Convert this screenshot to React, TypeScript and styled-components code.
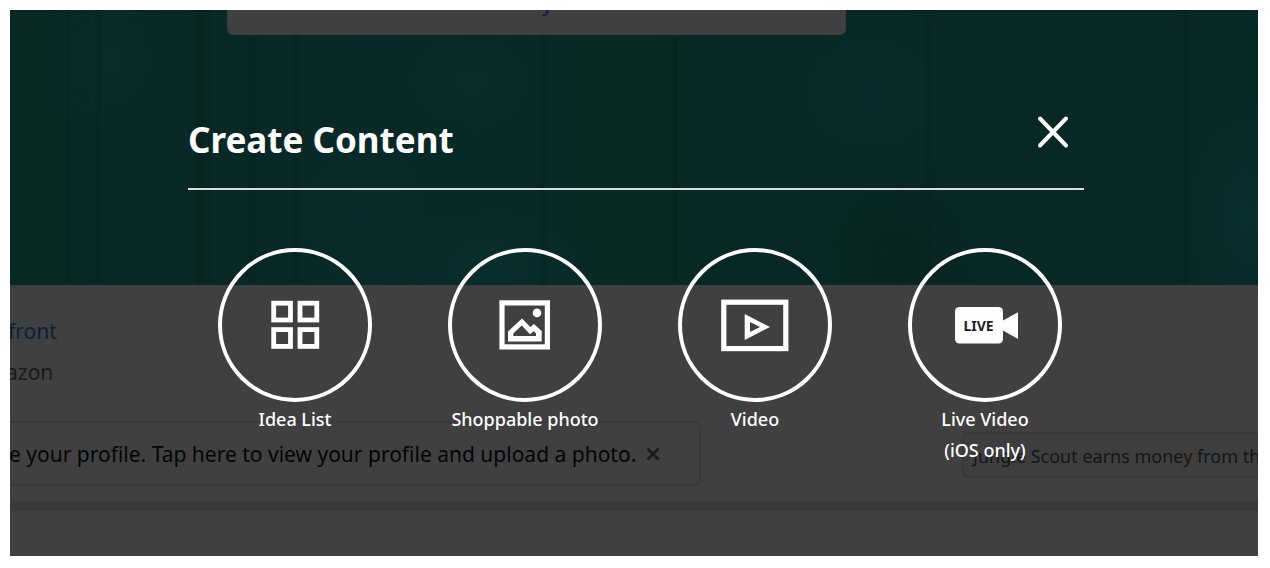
import React from "react";
import styled, { createGlobalStyle } from "styled-components";

const GlobalStyle = createGlobalStyle`
  *, *::before, *::after { box-sizing: border-box; }
  body {
    margin: 0;
    background: #fff;
    font-family: "Noto Sans", "Open Sans", sans-serif;
  }
`;

const Stage = styled.main`
  position: relative;
  margin: 10px 12px 12px 10px;
  overflow: hidden;
  background: #404040;
`;

const Banner = styled.section`
  height: 275px;
  background:
    linear-gradient(90deg, transparent 4.4%, #06201d66 4.6%, transparent 5%),
    linear-gradient(90deg, transparent 6.7%, #06201d77 7.1%, transparent 7.5%),
    linear-gradient(90deg, transparent 14.6%, #051f1b99 15.2%, transparent 16.4%),
    linear-gradient(90deg, transparent 18.8%, #06201d77 19.3%, transparent 20%),
    linear-gradient(90deg, transparent 22.4%, #06201d66 22.9%, transparent 23.4%),
    linear-gradient(90deg, transparent 42.2%, #06201d66 42.7%, transparent 43.2%),
    linear-gradient(90deg, transparent 52.8%, #06201d88 53.3%, transparent 53.8%),
    linear-gradient(90deg, transparent 73.2%, #06201d55 73.6%, transparent 74.2%),
    linear-gradient(90deg, transparent 93.7%, #06201d88 94.2%, transparent 94.6%),
    radial-gradient(ellipse 60px 120px at 99% 75%, #092f2e, transparent),
    radial-gradient(ellipse 80px 90px at 71% 92%, #06211dbb, transparent),
    radial-gradient(ellipse 80px 90px at 28% 75%, #082c2b, transparent),
    radial-gradient(ellipse 110px 70px at 38% 94%, #082e2d, transparent),
    radial-gradient(ellipse 70px 90px at 8% 18%, #082d2b, transparent),
    radial-gradient(ellipse 70px 60px at 37% 26%, #082d2b, transparent),
    radial-gradient(ellipse 110px 90px at 69% 30%, #082c2b, transparent),
    linear-gradient(90deg, #072823, #082927 30%, #072a25 48%, #082825 75%, #082827);
`;

const BannerCard = styled.div`
  width: calc(50% - 5px);
  height: 25px;
  margin-left: 217px;
  padding-left: 314px;
  overflow: hidden;
  border: 1px solid #3a3d3c;
  border-top: 0;
  border-radius: 0 0 6px 6px;
  background: #404040;
`;

const CardLink = styled.a`
  display: block;
  margin-top: -16px;
  color: #0a1f4a;
  font-size: 20px;
  font-weight: 500;
  line-height: 20px;
  text-decoration: none;
`;

const Profile = styled.section`
  height: 216px;
  padding-top: 30px;
  display: flex;
  align-items: flex-start;
  justify-content: space-between;
`;

const ProfileMain = styled.div`
  flex: none;
  width: 691px;
`;

const StoreLink = styled.a`
  display: block;
  margin-left: -2px;
  color: #0b1f3c;
  font-size: 21px;
  line-height: 32px;
  text-decoration: none;
`;

const Subtitle = styled.p`
  margin: 9px 0 33px -4px;
  color: #1a1a1a;
  font-size: 21px;
  line-height: 32px;
`;

const Notice = styled.div`
  display: flex;
  align-items: center;
  gap: 10px;
  height: 65px;
  margin-left: -1px;
  border: 2px solid #393939;
  border-left: 0;
  border-radius: 0 8px 8px 0;
  color: #050505;
  font-size: 21px;
  line-height: 32px;
  white-space: nowrap;
`;

const Dismiss = styled.button`
  display: flex;
  padding: 0;
  border: 0;
  background: none;
  color: #1a1a1a;
`;

const Disclosure = styled.div`
  flex: none;
  width: 296px;
  height: 46px;
  margin-top: 117px;
  padding-left: 9px;
  overflow: hidden;
  border: 2px solid #393939;
  border-right: 0;
  border-radius: 6px 0 0 6px;
  background: #3e3e3e;
  color: #151515;
  font-size: 18px;
  line-height: 44px;
  white-space: nowrap;
`;

const Divider = styled.hr`
  height: 10px;
  margin: 0;
  border: 0;
  background: #3a3a3a;
`;

const Footer = styled.div`
  height: 45px;
`;

const Dialog = styled.section`
  position: absolute;
  inset: 0;
  padding: 104px 174px 0 178px;
  color: #fff;
`;

const DialogHeader = styled.header`
  display: flex;
  align-items: flex-start;
  justify-content: space-between;
  height: 76px;
  padding-right: 14px;
  border-bottom: 2px solid #dcdcdf;
`;

const Title = styled.h1`
  margin: 0;
  font-size: 35px;
  font-weight: 700;
  line-height: 52px;
  white-space: nowrap;
`;

const CloseButton = styled.button`
  display: flex;
  padding: 1px 0;
  border: 0;
  background: none;
  color: #fff;
`;

const Options = styled.ul`
  display: grid;
  grid-template-columns: repeat(4, 1fr);
  margin: 58px -16px 0 -8px;
  padding: 0;
  list-style: none;
`;

const Option = styled.button`
  display: flex;
  flex-direction: column;
  align-items: center;
  width: 100%;
  padding: 0;
  border: 0;
  background: none;
  color: #fff;
  font: 500 18px/31px "Noto Sans", "Open Sans", sans-serif;
`;

const Ring = styled.span`
  display: flex;
  align-items: center;
  justify-content: center;
  width: 154px;
  height: 154px;
  border: 4px solid #fff;
  border-radius: 50%;
`;

const Label = styled.span`
  margin-top: 2px;
  white-space: pre-line;
`;

const IconSvg = styled.svg.attrs({ width: 80, height: 80, viewBox: "0 0 80 80", "aria-hidden": true })`
  display: block;
`;

const GridIcon = () => (
  <IconSvg fill="none" stroke="currentColor" strokeWidth="4.8">
    <rect x="18.7" y="18.2" width="16.8" height="16.8" />
    <rect x="45" y="18.2" width="16.8" height="16.8" />
    <rect x="18.7" y="44.6" width="16.8" height="16.8" />
    <rect x="45" y="44.6" width="16.8" height="16.8" />
  </IconSvg>
);

const PhotoIcon = () => (
  <IconSvg fill="currentColor">
    <rect x="17" y="17.9" width="45.4" height="44" fill="none" stroke="currentColor" strokeWidth="5.2" />
    <circle cx="52" cy="27.9" r="4.3" />
    <path
      fillRule="evenodd"
      d="M23 46.5 37 33.5 45.3 41.9 49 38.9 56.7 45.9V56.5H23ZM28.3 50.9V48.5L36.7 40.5 45 49.2 48.7 46.2 51 48.5V50.9Z"
    />
  </IconSvg>
);

const VideoIcon = () => (
  <IconSvg fill="currentColor">
    <rect x="8.8" y="17.2" width="62" height="46.4" fill="none" stroke="currentColor" strokeWidth="5.2" />
    <path fillRule="evenodd" d="M29.7 29 55 42 29.7 55ZM35 37V47L45 42Z" />
  </IconSvg>
);

const LiveIcon = () => (
  <IconSvg fill="currentColor">
    <rect x="10" y="22" width="48" height="36.6" rx="4.5" />
    <path d="M58 35.6 73 27.3V54L58 45.6Z" />
    <text x="33.5" y="46" textAnchor="middle" fill="#1c1c1c" fontSize="14" fontWeight="700">
      LIVE
    </text>
  </IconSvg>
);

const options = [
  { label: "Idea List", Icon: GridIcon },
  { label: "Shoppable photo", Icon: PhotoIcon },
  { label: "Video", Icon: VideoIcon },
  { label: "Live Video\n(iOS only)", Icon: LiveIcon },
];

export default function App() {
  return (
    <>
      <GlobalStyle />
      <Stage>
        <Banner>
          <BannerCard>
            <CardLink href="#">y</CardLink>
          </BannerCard>
        </Banner>
        <Profile>
          <ProfileMain>
            <StoreLink href="#">front</StoreLink>
            <Subtitle>azon</Subtitle>
            <Notice>
              <span>e your profile. Tap here to view your profile and upload a photo.</span>
              <Dismiss type="button" aria-label="Dismiss">
                <svg width="14" height="14" viewBox="0 0 14 14" stroke="currentColor" strokeWidth="2.6">
                  <path d="M1.5 1.5 12.5 12.5M12.5 1.5 1.5 12.5" />
                </svg>
              </Dismiss>
            </Notice>
          </ProfileMain>
          <Disclosure>Jungle Scout earns money from th</Disclosure>
        </Profile>
        <Divider />
        <Footer />
        <Dialog role="dialog" aria-labelledby="create-title">
          <DialogHeader>
            <Title id="create-title">Create Content</Title>
            <CloseButton type="button" aria-label="Close">
              <svg width="34" height="34" viewBox="0 0 34 34" stroke="currentColor" strokeWidth="4" strokeLinecap="round">
                <path d="M4 3.5 30 30.5M30 3.5 4 30.5" />
              </svg>
            </CloseButton>
          </DialogHeader>
          <Options>
            {options.map(({ label, Icon }) => (
              <li key={label}>
                <Option type="button">
                  <Ring>
                    <Icon />
                  </Ring>
                  <Label>{label}</Label>
                </Option>
              </li>
            ))}
          </Options>
        </Dialog>
      </Stage>
    </>
  );
}
